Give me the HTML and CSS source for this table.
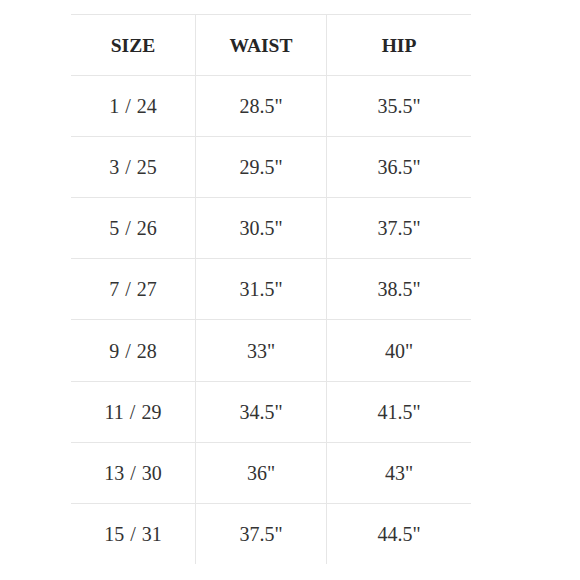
FILE: index.html
```html
<!DOCTYPE html>
<html>
<head>
<meta charset="utf-8">
<link rel="stylesheet" href="styles.css">
</head>
<body>
<div class="page">
  <div class="chart">
    <div class="row head">
      <div class="cell">SIZE</div>
      <div class="cell">WAIST</div>
      <div class="cell">HIP</div>
    </div>
    <div class="row"><div class="cell">1 / 24</div><div class="cell">28.5"</div><div class="cell">35.5"</div></div>
    <div class="row"><div class="cell">3 / 25</div><div class="cell">29.5"</div><div class="cell">36.5"</div></div>
    <div class="row"><div class="cell">5 / 26</div><div class="cell">30.5"</div><div class="cell">37.5"</div></div>
    <div class="row"><div class="cell">7 / 27</div><div class="cell">31.5"</div><div class="cell">38.5"</div></div>
    <div class="row tall"><div class="cell">9 / 28</div><div class="cell">33"</div><div class="cell">40"</div></div>
    <div class="row"><div class="cell">11 / 29</div><div class="cell">34.5"</div><div class="cell">41.5"</div></div>
    <div class="row"><div class="cell">13 / 30</div><div class="cell">36"</div><div class="cell">43"</div></div>
    <div class="row last"><div class="cell">15 / 31</div><div class="cell">37.5"</div><div class="cell">44.5"</div></div>
  </div>
</div>
</body>
</html>
```
FILE: styles.css
```css
html, body {
  margin: 0;
  padding: 0;
  background: #ffffff;
}
.page {
  width: 580px;
  height: 580px;
  padding: 14px 0 0 71px;
  box-sizing: border-box;
}
.chart {
  width: 400px;
  display: flex;
  flex-direction: column;
  font-family: "Liberation Serif", "Times New Roman", serif;
  color: #333333;
  font-size: 20px;
  word-spacing: 1px;
}
.row {
  display: grid;
  grid-template-columns: 124px 131px 145px;
  box-sizing: border-box;
  height: 61px;
  border-top: 1px solid #e6e6e6;
}
.row.tall {
  height: 62px;
}
.row.last {
  height: 61px;
}
.cell {
  display: flex;
  align-items: center;
  justify-content: center;
  padding-top: 1px;
}
.cell + .cell {
  border-left: 1px solid #e6e6e6;
}
.head .cell {
  font-weight: bold;
  font-size: 19.5px;
  color: #262626;
}
```
